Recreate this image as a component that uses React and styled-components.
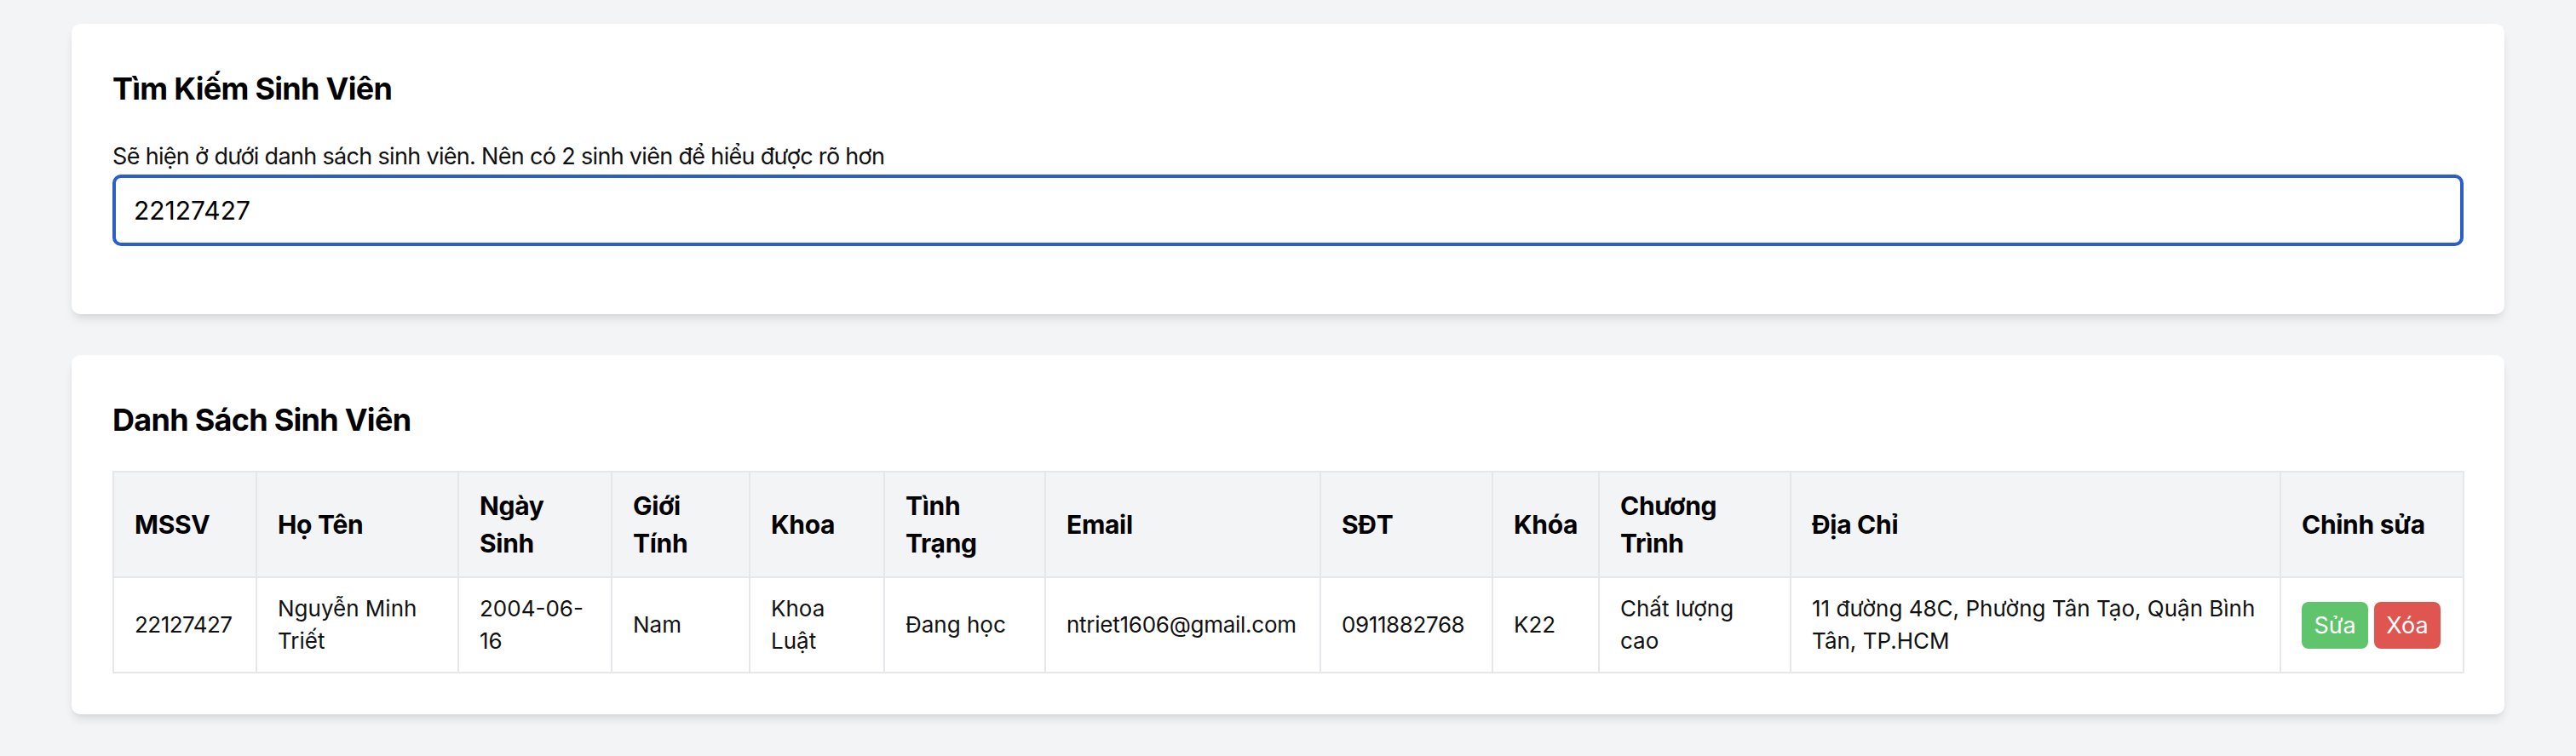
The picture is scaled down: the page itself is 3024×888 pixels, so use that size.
import React from "react";
import styled, { createGlobalStyle } from "styled-components";

const GlobalStyle = createGlobalStyle`
  html, body {
    margin: 0;
    padding: 0;
    background: #f3f4f6;
    font-family: Inter, "Noto Sans", "Liberation Sans", sans-serif;
    color: #111;
  }
  * { box-sizing: border-box; }
`;

const Page = styled.main`
  display: flex;
  flex-direction: column;
  gap: 48px;
  padding: 28px 84px 48px;
`;

const Card = styled.section`
  background: #fff;
  border-radius: 10px;
  padding: 48px;
  box-shadow: 0 8px 12px -2px rgba(0, 0, 0, 0.09), 0 3px 8px -4px rgba(0, 0, 0, 0.1);
`;

const Title = styled.h2`
  margin: 0 0 32px;
  font-size: 36px;
  line-height: 56px;
  font-weight: 700;
  letter-spacing: -0.02em;
  color: #000;
`;

const Label = styled.label`
  display: block;
  font-size: 27px;
  line-height: 40px;
  letter-spacing: -0.025em;
  margin-bottom: 1px;
  color: #111;
`;

const SearchInput = styled.input`
  display: block;
  width: 100%;
  height: 84px;
  margin: 0 0 32px;
  padding: 0 21px;
  border: 4px solid #2a5fc9;
  border-radius: 10px;
  font-family: inherit;
  font-size: 30px;
  color: #000;
  background: #fff;
  outline: none;
`;

const Table = styled.table`
  width: 100%;
  border-collapse: collapse;
  table-layout: fixed;
  border: 2px solid #e5e7eb;
`;

const HeadCell = styled.th`
  background: #f3f4f6;
  border: 2px solid #e5e7eb;
  padding: 17px 24px;
  text-align: left;
  vertical-align: middle;
  font-size: 30px;
  line-height: 44px;
  font-weight: 700;
  letter-spacing: -0.01em;
  color: #000;
`;

const Cell = styled.td`
  border: 2px solid #e5e7eb;
  padding: 17px 24px;
  text-align: left;
  vertical-align: middle;
  font-size: 26px;
  line-height: 38px;
  letter-spacing: ${(p) => p.$spacing || "0"};
  color: #111;
  white-space: ${(p) => (p.$spacing ? "nowrap" : "normal")};
`;

const Actions = styled.div`
  display: flex;
  gap: 7px;
`;

const ActionButton = styled.button`
  display: inline-flex;
  align-items: center;
  justify-content: center;
  width: 78px;
  height: 55px;
  padding: 0;
  border: none;
  border-radius: 8px;
  background: ${(p) => (p.$variant === "danger" ? "#df5550" : "#5fc46b")};
  color: #fff;
  font-family: inherit;
  font-size: 27px;
  cursor: pointer;
`;

const columns = [
  { key: "mssv", label: "MSSV", width: 168, spacing: "-0.02em" },
  { key: "name", label: "Họ Tên", width: 237 },
  { key: "dob", label: "Ngày Sinh", width: 180 },
  { key: "gender", label: "Giới Tính", width: 162 },
  { key: "faculty", label: "Khoa", width: 158 },
  { key: "status", label: "Tình Trạng", width: 189 },
  { key: "email", label: "Email", width: 323, spacing: "-0.01em" },
  { key: "phone", label: "SĐT", width: 202, spacing: "-0.015em" },
  { key: "course", label: "Khóa", width: 125 },
  { key: "program", label: "Chương Trình", width: 225 },
  { key: "address", label: "Địa Chỉ", width: 575 },
  { key: "edit", label: "Chỉnh sửa", width: 215 },
];

const students = [
  {
    mssv: "22127427",
    name: "Nguyễn Minh Triết",
    dob: "2004-06-16",
    gender: "Nam",
    faculty: "Khoa Luật",
    status: "Đang học",
    email: "ntriet1606@gmail.com",
    phone: "0911882768",
    course: "K22",
    program: "Chất lượng cao",
    address: "11 đường 48C, Phường Tân Tạo, Quận Bình Tân, TP.HCM",
  },
];

export default function App() {
  return (
    <>
      <GlobalStyle />
      <Page>
        <Card>
          <Title>Tìm Kiếm Sinh Viên</Title>
          <Label htmlFor="search">
            Sẽ hiện ở dưới danh sách sinh viên. Nên có 2 sinh viên để hiểu được rõ hơn
          </Label>
          <SearchInput id="search" type="text" defaultValue="22127427" />
        </Card>
        <Card>
          <Title>Danh Sách Sinh Viên</Title>
          <Table>
            <colgroup>
              {columns.map((c) => (
                <col key={c.key} style={{ width: c.width }} />
              ))}
            </colgroup>
            <thead>
              <tr>
                {columns.map((c) => (
                  <HeadCell key={c.key}>{c.label}</HeadCell>
                ))}
              </tr>
            </thead>
            <tbody>
              {students.map((s) => (
                <tr key={s.mssv}>
                  {columns.map((c) =>
                    c.key === "edit" ? (
                      <Cell key={c.key}>
                        <Actions>
                          <ActionButton>Sửa</ActionButton>
                          <ActionButton $variant="danger">Xóa</ActionButton>
                        </Actions>
                      </Cell>
                    ) : (
                      <Cell key={c.key} $spacing={c.spacing}>
                        {s[c.key]}
                      </Cell>
                    )
                  )}
                </tr>
              ))}
            </tbody>
          </Table>
        </Card>
      </Page>
    </>
  );
}
